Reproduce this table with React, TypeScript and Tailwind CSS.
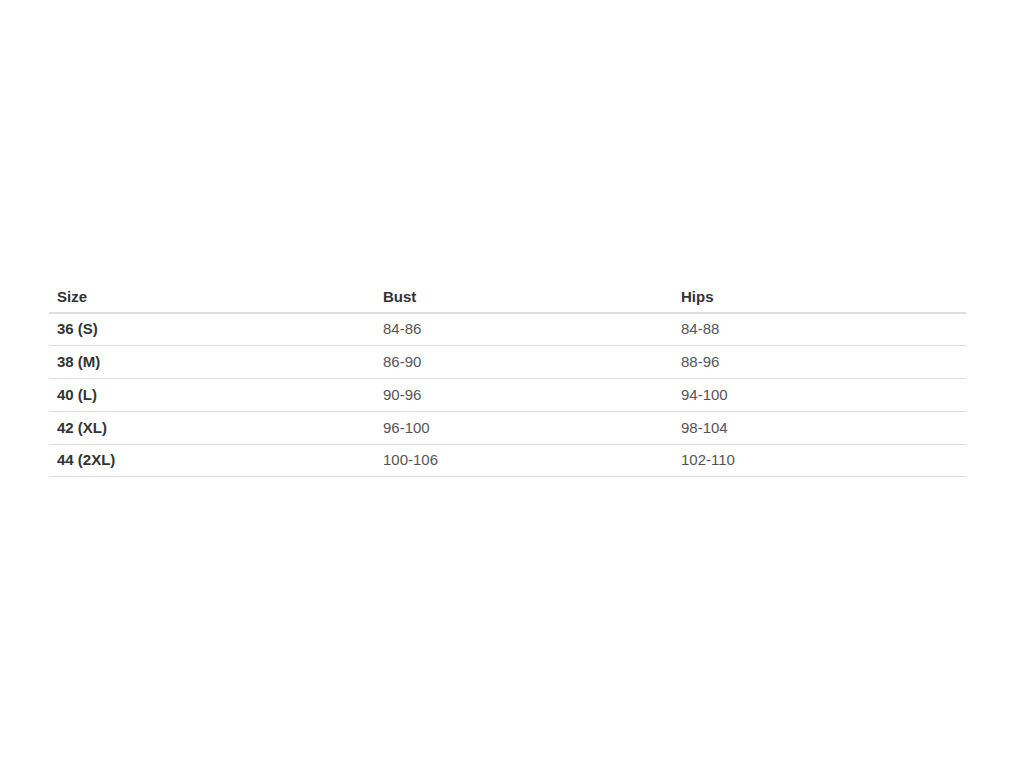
const rows = [
  ["36 (S)", "84-86", "84-88"],
  ["38 (M)", "86-90", "88-96"],
  ["40 (L)", "90-96", "94-100"],
  ["42 (XL)", "96-100", "98-104"],
  ["44 (2XL)", "100-106", "102-110"],
];

export default function App() {
  return (
    <div className="min-h-[768px] bg-white pl-[49px] pr-[58px] pt-[282px] font-['Liberation_Sans',Arial,sans-serif] text-[15px]">
      <table className="w-full border-collapse">
        <thead>
          <tr className="h-[31px] border-b-2 border-[#dddddd] text-left text-[#333333]">
            <th className="w-[326px] pl-2 font-bold">Size</th>
            <th className="w-[298px] pl-2 font-bold">Bust</th>
            <th className="pl-2 font-bold">Hips</th>
          </tr>
        </thead>
        <tbody>
          {rows.map(([size, bust, hips]) => (
            <tr key={size} className="h-[32.8px] border-b border-[#dddddd]">
              <td className="pl-2 font-bold text-[#333333]">{size}</td>
              <td className="pl-2 text-[#555555]">{bust}</td>
              <td className="pl-2 text-[#555555]">{hips}</td>
            </tr>
          ))}
        </tbody>
      </table>
    </div>
  );
}
